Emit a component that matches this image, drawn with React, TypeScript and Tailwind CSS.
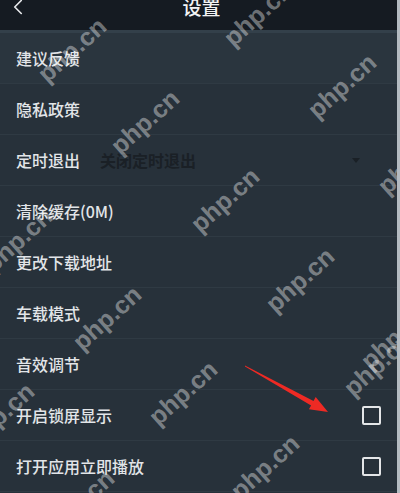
import { ChevronLeft } from 'lucide-react'

type Row = {
  label: string
  kind?: 'select' | 'check'
  value?: string
}

const rows: Row[] = [
  { label: '建议反馈' },
  { label: '隐私政策' },
  { label: '定时退出', kind: 'select', value: '关闭定时退出' },
  { label: '清除缓存(0M)' },
  { label: '更改下载地址' },
  { label: '车载模式' },
  { label: '音效调节' },
  { label: '开启锁屏显示', kind: 'check' },
  { label: '打开应用立即播放', kind: 'check' },
]

// watermark spots, these sit over the page like the stamped image
const marks = [
  { x: 72, y: 50 },
  { x: 258, y: 14 },
  { x: 342, y: 86 },
  { x: 145, y: 122 },
  { x: 225, y: 200 },
  { x: 412, y: 162 },
  { x: 18, y: 240 },
  { x: 300, y: 280 },
  { x: 107, y: 318 },
  { x: 395, y: 337 },
  { x: 0, y: 415 },
  { x: 183, y: 393 },
  { x: 378, y: 364 },
  { x: 265, y: 467 },
  { x: 80, y: 502 },
]

function Checkbox() {
  return <div className="w-[19px] h-[19px] rounded-[2px] border-2 border-[#e4e6e8]" />
}

export default function App() {
  return (
    <div
      className="relative w-[400px] h-[493px] overflow-hidden bg-[#27313a] border-r-[3px] border-[#b4bbc1]"
      style={{ fontFamily: '"Noto Sans CJK SC", "Noto Sans", sans-serif' }}
    >
      <div className="h-[30px] overflow-hidden bg-[#151b22]">
        <div className="relative -mt-[16px] h-[46px] flex items-center justify-center">
          <ChevronLeft className="absolute left-[5px] w-[26px] h-[26px] text-[#e8eaec]" strokeWidth={1.5} />
          <span className="text-[19px] text-[#f2f3f4] font-medium pl-[6px]">设置</span>
        </div>
      </div>
      <div className="h-[3px] bg-[#33404a]" />

      <div className="flex flex-col">
        {rows.map((row, i) => (
          <div
            key={i}
            className={
              'h-[51px] flex items-center pl-[16px] pr-[16px] border-b border-[#2f3a43] ' +
              (i === 0 ? 'bg-[#2a353e]' : '')
            }
          >
            <span className="text-[16px] text-[#e2e5e8] font-medium">{row.label}</span>
            {row.kind === 'select' && (
              <div className="flex-1 flex items-center ml-[20px] pr-[21px]">
                <span className="flex-1 text-[16px] text-[#1a2026] font-bold">{row.value}</span>
                <div className="w-0 h-0 border-l-[4px] border-r-[4px] border-t-[5px] border-l-transparent border-r-transparent border-t-[#1a2026]" />
              </div>
            )}
            {row.kind === 'check' && (
              <div className="ml-auto">
                <Checkbox />
              </div>
            )}
          </div>
        ))}
      </div>

      {marks.map((m, i) => (
        <div
          key={i}
          className="absolute pointer-events-none text-[25px] font-bold text-white/40 leading-none whitespace-nowrap"
          style={{
            left: m.x,
            top: m.y,
            transform: 'translate(-50%, -50%) rotate(-42deg)',
            fontFamily: '"Liberation Sans", Arial, sans-serif',
          }}
        >
          php.cn
        </div>
      ))}

      <svg className="absolute inset-0 pointer-events-none" width="400" height="493" viewBox="0 0 400 493">
        <polygon
          points="245,365.5 313.5,401 315.7,397.1 328,412 308.9,409.3 311.1,405.4 245,366.5"
          fill="#ee2a24"
        />
      </svg>
    </div>
  )
}
